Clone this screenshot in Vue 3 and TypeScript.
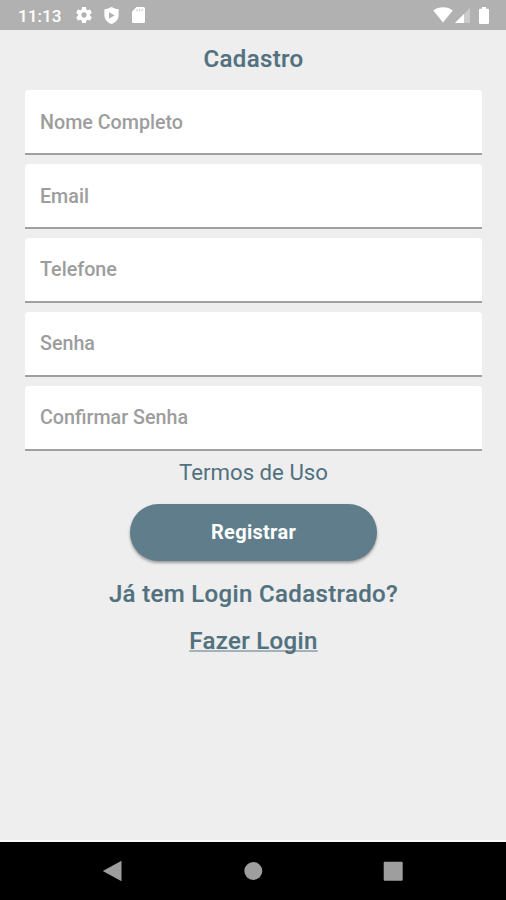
<script setup lang="ts">
import { reactive } from 'vue'

interface Field {
  key: string
  label: string
  type: string
}

const fields: Field[] = [
  { key: 'name', label: 'Nome Completo', type: 'text' },
  { key: 'email', label: 'Email', type: 'email' },
  { key: 'phone', label: 'Telefone', type: 'tel' },
  { key: 'password', label: 'Senha', type: 'password' },
  { key: 'confirm', label: 'Confirmar Senha', type: 'password' },
]

const form = reactive<Record<string, string>>({
  name: '',
  email: '',
  phone: '',
  password: '',
  confirm: '',
})
</script>

<template>
  <div class="screen">
    <header class="status">
      <div class="status-left">
        <span class="clock">11:13</span>
        <svg class="gear" viewBox="2 2 20 20">
          <path
            d="M19.43 12.98c.04-.32.07-.64.07-.98s-.03-.66-.07-.98l2.11-1.65c.19-.15.24-.42.12-.64l-2-3.46c-.12-.22-.39-.3-.61-.22l-2.49 1c-.52-.4-1.08-.73-1.69-.98l-.38-2.65C14.46 2.18 14.25 2 14 2h-4c-.25 0-.46.18-.49.42l-.38 2.65c-.61.25-1.17.59-1.69.98l-2.49-1c-.23-.09-.49 0-.61.22l-2 3.46c-.13.22-.07.49.12.64l2.11 1.65c-.04.32-.07.65-.07.98s.03.66.07.98l-2.11 1.65c-.19.15-.24.42-.12.64l2 3.46c.12.22.39.3.61.22l2.49-1c.52.4 1.08.73 1.69.98l.38 2.65c.03.24.24.42.49.42h4c.25 0 .46-.18.49-.42l.38-2.65c.61-.25 1.17-.59 1.69-.98l2.49 1c.23.09.49 0 .61-.22l2-3.46c.12-.22.07-.49-.12-.64l-2.11-1.65zM12 15.3c-1.8 0-3.3-1.5-3.3-3.3s1.5-3.3 3.3-3.3 3.3 1.5 3.3 3.3-1.5 3.3-3.3 3.3z"
          />
        </svg>
        <svg class="shield" viewBox="0 0 15 17">
          <path
            fill-rule="evenodd"
            d="M7.5 0C5.2 1.3 2.9 2 .4 2.3V8.5C.4 12.4 3.5 15.6 7.5 17c4-1.4 7.1-4.6 7.1-8.5V2.3C12.1 2 9.8 1.3 7.5 0zM5 5.2v6.4l5.8-3.2z"
          />
        </svg>
        <svg class="card" viewBox="0 0 13 16">
          <path d="M4.5 0H11.5Q13 0 13 1.5V14.5Q13 16 11.5 16H1.5Q0 16 0 14.5V4.5z" />
          <path class="pins" d="M4.5 2h1.2v2.4H4.5zM7 2h1.2v2.4H7zM9.5 2h1.2v2.4H9.5z" />
        </svg>
      </div>
      <div class="status-right">
        <svg class="wifi" viewBox="0 0 20 16">
          <path d="M10 15.5L.3 3.4C3 1.3 6.3.2 10 .2s7 1.1 9.7 3.2z" />
        </svg>
        <svg class="signal" viewBox="0 0 15 15">
          <path class="faint" d="M15 0V15H0z" />
          <path d="M9 6V15H0z" />
        </svg>
        <svg class="battery" viewBox="0 0 10 17">
          <path d="M3 0h4v1.7h1.8Q10 1.7 10 2.9V15.8Q10 17 8.8 17H1.2Q0 17 0 15.8V2.9Q0 1.7 1.2 1.7H3z" />
        </svg>
      </div>
    </header>

    <main class="content">
      <h1 class="title">Cadastro</h1>
      <form class="form" @submit.prevent>
        <input
          v-for="field in fields"
          :key="field.key"
          v-model="form[field.key]"
          class="field"
          :type="field.type"
          :placeholder="field.label"
        />
        <a class="terms">Termos de Uso</a>
        <button class="submit" type="submit">Registrar</button>
      </form>
      <p class="question">Já tem Login Cadastrado?</p>
      <a class="login">Fazer Login</a>
    </main>

    <nav class="navbar">
      <svg class="nav-icon" viewBox="0 0 22 22">
        <path d="M.8 11L19.5 .8V21.2z" />
      </svg>
      <svg class="nav-icon" viewBox="0 0 22 22">
        <circle cx="11.3" cy="11" r="9" />
      </svg>
      <svg class="nav-icon" viewBox="0 0 22 22">
        <rect x="1.7" y="1.7" width="19" height="19" rx="1" />
      </svg>
    </nav>
  </div>
</template>

<style>
body {
  margin: 0;
}
</style>

<style scoped>
.screen {
  display: flex;
  flex-direction: column;
  height: 900px;
  background: #eeeeee;
  color: #52717f;
  font-family: Roboto, sans-serif;
}
.status {
  box-sizing: border-box;
  display: flex;
  justify-content: space-between;
  height: 30px;
  padding: 0 17px 0 18px;
  background: #b1b1b1;
  color: #fff;
}
.status-left,
.status-right {
  display: flex;
  align-items: center;
}
.status svg {
  fill: #fff;
}
.clock {
  width: 58px;
  padding-top: 2px;
  font-size: 17.2px;
  font-weight: 500;
  line-height: 20px;
}
.gear {
  width: 16px;
  height: 16px;
  margin-right: 12px;
}
.shield {
  width: 15px;
  height: 17px;
  margin-right: 13px;
}
.card {
  width: 13px;
  height: 16px;
}
.status .card .pins {
  fill: #d2d2d2;
}
.wifi {
  width: 20px;
  height: 16px;
  margin-right: 2px;
}
.signal {
  width: 15px;
  height: 15px;
  margin-right: 9px;
}
.status .signal .faint {
  fill: #cbcbcb;
}
.battery {
  width: 10px;
  height: 17px;
}
.content {
  display: flex;
  flex: 1;
  flex-direction: column;
  align-items: center;
  padding: 0 24px 0 25px;
}
.title,
.question,
.login {
  font-size: 24px;
  font-weight: 500;
  line-height: 30px;
  letter-spacing: 0.35px;
  -webkit-text-stroke: 0.2px currentColor;
}
.title {
  margin: 14px 0 16.4px;
}
.form {
  display: flex;
  flex-direction: column;
  align-items: center;
  align-self: stretch;
}
.field {
  box-sizing: border-box;
  width: 100%;
  height: 65px;
  margin: 0 0 8.8px;
  padding: 1px 15px 0;
  border: 0;
  border-bottom: 2px solid #a0a0a0;
  border-radius: 4px 4px 0 0;
  outline: 0;
  background: #fff;
  color: #333;
  font-family: inherit;
  font-size: 19.7px;
  font-weight: 500;
}
.field::placeholder {
  color: #9d9d9d;
  opacity: 1;
}
.terms {
  font-size: 22.2px;
  line-height: 26px;
}
.submit {
  width: 247px;
  height: 57px;
  margin-top: 18.5px;
  padding: 0 0 1px;
  border: 0;
  border-radius: 29px;
  background: #607d8b;
  box-shadow: 0 2px 3px rgba(0, 0, 0, 0.35);
  color: #fff;
  font-family: inherit;
  font-size: 20px;
  font-weight: 700;
  letter-spacing: 0.3px;
}
.question {
  margin: 18px 0 17px;
}
.login {
  text-decoration: underline;
  text-decoration-color: #a3b2b9;
  text-decoration-thickness: 2px;
  text-underline-offset: 1px;
  text-decoration-skip-ink: none;
}
.navbar {
  box-sizing: border-box;
  display: flex;
  align-items: center;
  justify-content: space-between;
  height: 60px;
  padding: 0 102px;
  border-top: 2px solid #fafafa;
  background: #000;
}
.nav-icon {
  width: 22px;
  height: 22px;
  fill: #9e9e9e;
}
</style>
